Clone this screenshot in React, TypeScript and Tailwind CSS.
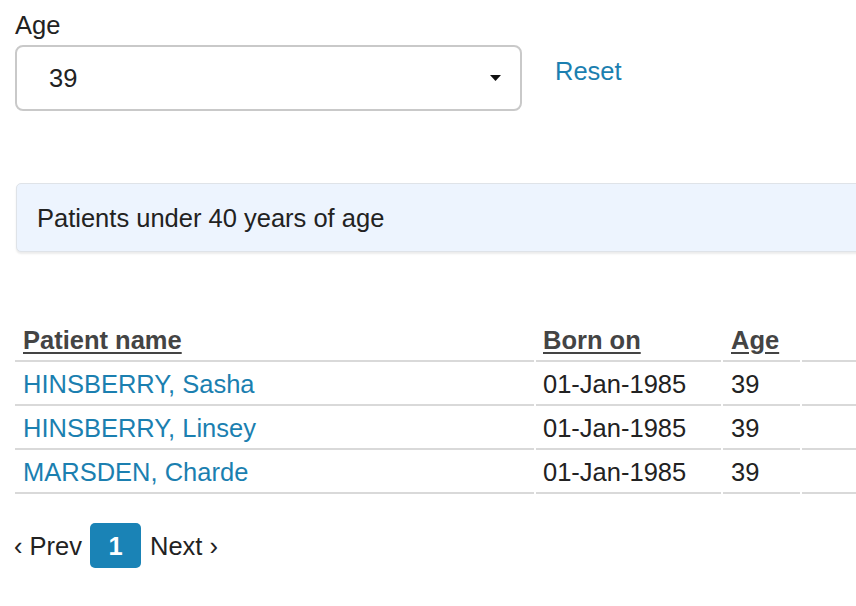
// @ts-nocheck
import React from 'react';

const patients = [
    { name: 'HINSBERRY, Sasha', born: '01-Jan-1985', age: 39 },
    { name: 'HINSBERRY, Linsey', born: '01-Jan-1985', age: 39 },
    { name: 'MARSDEN, Charde', born: '01-Jan-1985', age: 39 },
];

export default function App() {
    return (
        <div className="w-[856px] h-[606px] overflow-hidden bg-white font-['Liberation_Sans',Arial,sans-serif] text-[25.5px] leading-[28px] text-[#222]">
            <div className="pl-[15px] pt-[11px] w-[1000px]">
                {/* Filter */}
                <label className="block">Age</label>
                <div className="flex items-start mt-[6px]">
                    <div className="w-[507px] h-[66px] border-2 border-[#c9c9c9] rounded-[8px] flex items-center justify-between pl-[32px] pr-[19px]">
                        <span>39</span>
                        <svg width="11" height="6" viewBox="0 0 11 6">
                            <path d="M0 0 L11 0 L5.5 6 Z" fill="#111" />
                        </svg>
                    </div>
                    <a className="ml-[33px] mt-[12px] text-[#1b7fb0]">Reset</a>
                </div>

                {/* Alert */}
                <div className="mt-[72px] ml-[1px] h-[69px] flex items-center pl-[20px] bg-[#edf4fe] border border-[#dfe3e8] rounded-[5px] shadow-[0_2px_2px_rgba(0,0,0,0.08)]">
                    Patients under 40 years of age
                </div>

                {/* Results */}
                <table className="mt-[66px] -ml-[2px] border-separate border-spacing-[2px]">
                    <thead>
                        <tr>
                            <th className="w-[519px] text-left font-bold text-[#444] px-[8px] pt-[6px] pb-[6px] border-b-2 border-[#d9d9d9]">
                                <span className="underline underline-offset-[3px]">Patient name</span>
                            </th>
                            <th className="w-[185px] text-left font-bold text-[#444] px-[7px] pt-[6px] pb-[6px] border-b-2 border-[#d9d9d9]">
                                <span className="underline underline-offset-[3px]">Born on</span>
                            </th>
                            <th className="w-[77px] text-left font-bold text-[#444] px-[8px] pt-[6px] pb-[6px] border-b-2 border-[#d9d9d9]">
                                <span className="underline underline-offset-[3px]">Age</span>
                            </th>
                            <th className="w-[120px] border-b-2 border-[#d9d9d9]"></th>
                        </tr>
                    </thead>
                    <tbody>
                        {patients.map((p) => (
                            <tr key={p.name}>
                                <td className="px-[8px] py-[6px] border-b-2 border-[#d9d9d9] text-[#1b7fb0]">{p.name}</td>
                                <td className="px-[7px] py-[6px] border-b-2 border-[#d9d9d9]">{p.born}</td>
                                <td className="px-[8px] py-[6px] border-b-2 border-[#d9d9d9]">{p.age}</td>
                                <td className="border-b-2 border-[#d9d9d9]"></td>
                            </tr>
                        ))}
                    </tbody>
                </table>

                {/* Pagination */}
                <div className="flex items-center mt-[27px] -ml-[1px]">
                    <span>‹ Prev</span>
                    <span className="ml-[8px] w-[51px] h-[45px] rounded-[5px] bg-[#1a83b6] text-white font-bold flex items-center justify-center">1</span>
                    <span className="ml-[9px]">Next ›</span>
                </div>
            </div>
        </div>
    );
}
